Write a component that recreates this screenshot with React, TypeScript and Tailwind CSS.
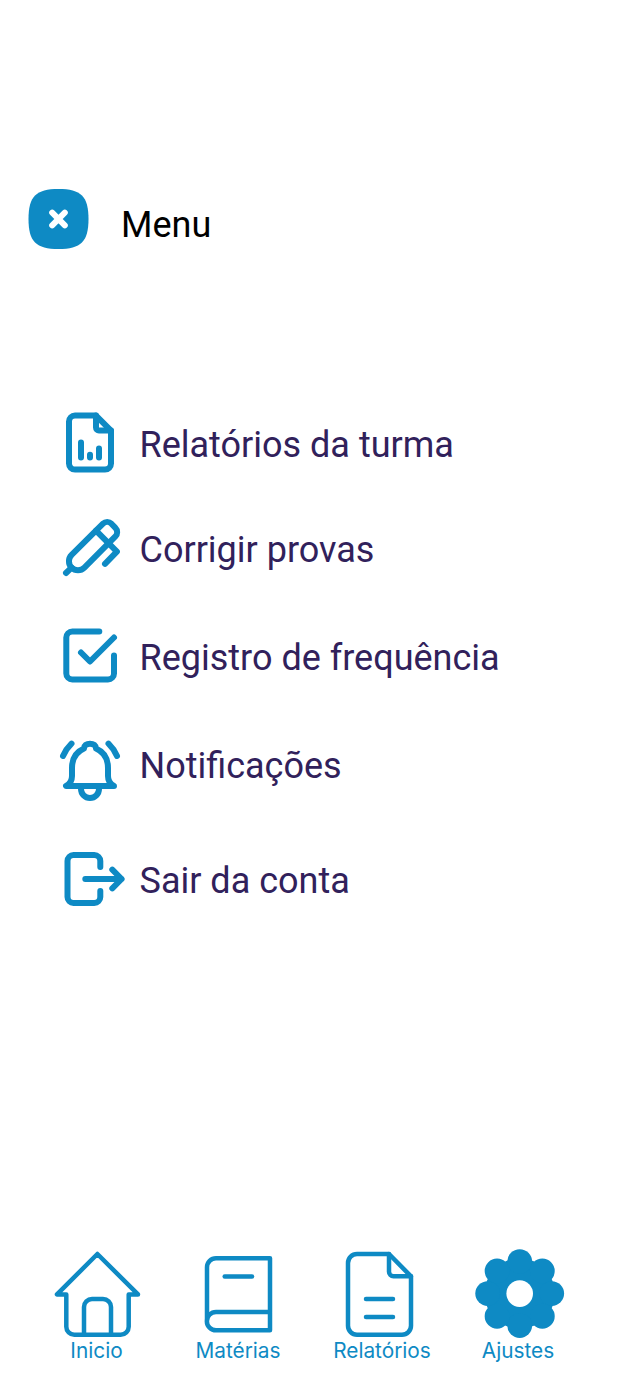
import type { ReactNode } from "react";

type MenuItem = { label: string; icon: ReactNode; row: string; text: string };
type Tab = { label: string; icon: ReactNode; offset: string };

// Side menu icons share a 90px canvas and a 6px round stroke.
function MenuIcon({ children }: { children: ReactNode }) {
  return (
    <svg
      viewBox="0 0 90 90"
      className="size-[90px] shrink-0"
      fill="none"
      stroke="currentColor"
      strokeWidth={6}
      strokeLinecap="round"
      strokeLinejoin="round"
    >
      {children}
    </svg>
  );
}

function TabIcon({ children }: { children: ReactNode }) {
  return (
    <svg
      viewBox="0 0 120 100"
      className="w-[120px] h-[100px]"
      fill="none"
      stroke="currentColor"
      strokeWidth={4.5}
      strokeLinecap="round"
      strokeLinejoin="round"
    >
      {children}
    </svg>
  );
}

const menuItems: MenuItem[] = [
  {
    label: "Relatórios da turma",
    row: "",
    text: "pt-6",
    icon: (
      <MenuIcon>
        <path d="M46 15.6H25a6 6 0 0 0-6 6v42a6 6 0 0 0 6 6h30a6 6 0 0 0 6-6v-33z" />
        <path d="M46 15.6v12a3 3 0 0 0 3 3h12" />
        <path d="M31 42.5v15M40 54.7v2.8M49 48.5v9" />
      </MenuIcon>
    ),
  },
  {
    label: "Corrigir provas",
    row: "mt-[15px]",
    text: "pt-6",
    icon: (
      <MenuIcon>
        <path d="M21.6 49.8L53 18.7a6 6 0 0 1 8.4 0l4 4.2a6 6 0 0 1 0 8.5L34.4 62.6a9 9 0 0 1-12.8-12.8z" />
        <path d="M21.6 62.6L16 68M46 25.7l20.9 20.9L55 58.8" />
      </MenuIcon>
    ),
  },
  {
    label: "Registro de frequência",
    row: "mt-5",
    text: "pt-[22px]",
    icon: (
      <MenuIcon>
        <path d="M49.3 16.5h-27a6 6 0 0 0-6 6v36a6 6 0 0 0 6 6H58a6 6 0 0 0 6-6v-18" />
        <path d="M31 37.5l9 9L64 22.5" />
      </MenuIcon>
    ),
  },
  {
    label: "Notificações",
    row: "mt-5",
    text: "pt-5",
    icon: (
      <MenuIcon>
        <path d="M16 61h48c-4-2-6-6-6-10v-8c0-9-4-16-12-19.500C46 20.500 43.500 18.700 40 18.700S34 20.500 34 23.500C26 27 22 34 22 43v8c0 4-2 8-6 10z" />
        <path d="M31 64a9 9 0 0 0 18 0" />
        <path d="M13 31q3-7 8.500-12.300M67 31q-3-7-8.500-12.300" />
      </MenuIcon>
    ),
  },
  {
    label: "Sair da conta",
    row: "mt-5",
    text: "pt-[25px]",
    icon: (
      <MenuIcon>
        <path d="M50.300 32v-6a6 6 0 0 0-6-6H23.500a6 6 0 0 0-6 6v36a6 6 0 0 0 6 6h20.800a6 6 0 0 0 6-6v-6" />
        <path d="M35.300 44H71.500M62.300 34.700l9.300 9.300-9.300 9.300" />
      </MenuIcon>
    ),
  },
];

const petals = [0, 45, 90, 135, 180, 225, 270, 315];

const tabs: Tab[] = [
  {
    label: "Inicio",
    offset: "-ml-[7px]",
    icon: (
      <TabIcon>
        <path d="M57.400 14L17 54.400h9.300v32.300a8 8 0 0 0 8 8h46.400a8 8 0 0 0 8-8V54.400H98z" />
        <path d="M44 94.700V67a8 8 0 0 1 8-8h11a8 8 0 0 1 8 8v27.700" />
      </TabIcon>
    ),
  },
  {
    label: "Matérias",
    offset: "-ml-[4px]",
    icon: (
      <TabIcon>
        <path d="M27 81.300v-54a9 9 0 0 1 9-9h54v72H36a9 9 0 0 1 0-18.300h54" />
        <path d="M44.700 36.400h27.300" />
      </TabIcon>
    ),
  },
  {
    label: "Relatórios",
    offset: "ml-1",
    icon: (
      <TabIcon>
        <path d="M69 14H37a9 9 0 0 0-9 9v62.700a9 9 0 0 0 9 9h45a9 9 0 0 0 9-9V36.300z" />
        <path d="M69 14v17.800a4.500 4.500 0 0 0 4.500 4.500H91" />
        <path d="M46 59h27M46 77h27" />
      </TabIcon>
    ),
  },
  {
    label: "Ajustes",
    offset: "-ml-[4px]",
    icon: (
      <TabIcon>
        <g fill="currentColor" stroke="none">
          <circle cx="59.700" cy="53.600" r="35.200" />
          {petals.map((angle) => (
            <circle
              key={angle}
              cx="59.700"
              cy="21.600"
              r="12.400"
              transform={`rotate(${angle} 59.700 53.600)`}
            />
          ))}
        </g>
        <circle cx="59.700" cy="53.600" r="13.300" fill="white" stroke="none" />
      </TabIcon>
    ),
  },
];

export default function App() {
  return (
    <div className="flex h-[1376px] w-[618px] flex-col overflow-hidden bg-white pt-[189px] font-[Roboto,sans-serif]">
      <header className="flex h-[60px] items-start pl-7">
        <button aria-label="Fechar menu" className="h-[60px] w-[61px] shrink-0 text-[#0e8ac4]">
          <svg viewBox="0 0 61 60" className="block h-[60px] w-[61px]">
            <path
              d="M.5 30C.5 7.500 8 0 30.500 0s30 7.500 30 30-7.500 30-30 30S.500 52.500.500 30z"
              fill="currentColor"
            />
            <path
              d="M24.200 23.700l12.600 12.600M36.800 23.700L24.200 36.300"
              stroke="white"
              strokeWidth="6"
              strokeLinecap="round"
            />
          </svg>
        </button>
        <h1 className="ml-8 pt-[15px] text-[36px] leading-[42px] text-black">Menu</h1>
      </header>

      <nav className="mt-[151px] flex flex-col pl-[50px]">
        {menuItems.map((item) => (
          <a key={item.label} className={`flex h-[90px] items-start ${item.row}`}>
            <span className="text-[#0e8ac4]">{item.icon}</span>
            <span
              className={`-ml-[0.5px] whitespace-nowrap text-[36px] leading-[42px] text-[#31215b] ${item.text}`}
            >
              {item.label}
            </span>
          </a>
        ))}
      </nav>

      <footer className="mt-[315px] flex gap-5 pl-10 text-[#0e8ac4]">
        {tabs.map((tab) => (
          <a key={tab.label} className="flex w-[120px] flex-col items-center">
            {tab.icon}
            <span
              className={`-mt-px font-[Inter,sans-serif] text-[20.8px] font-normal leading-[24px] ${tab.offset}`}
            >
              {tab.label}
            </span>
          </a>
        ))}
      </footer>
    </div>
  );
}
